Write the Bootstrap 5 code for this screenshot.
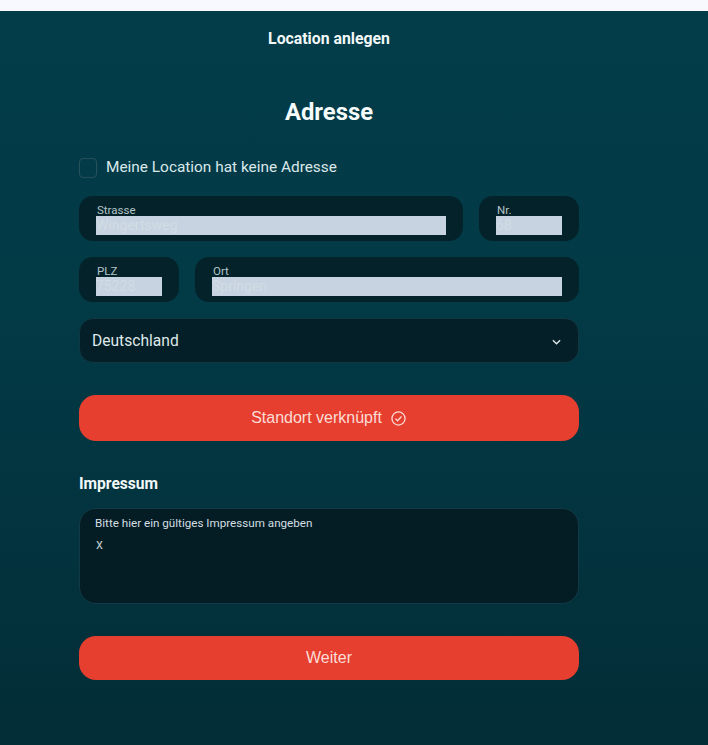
<!DOCTYPE html>
<html lang="de">
  <head>
    <meta charset="UTF-8" />
    <title>Location anlegen</title>
    <link
      href="https://cdn.jsdelivr.net/npm/bootstrap@5.3.0/dist/css/bootstrap.min.css"
      rel="stylesheet"
    />
    <style>
      body {
        background: #f8f9ff;
        font-family: Roboto, "Liberation Sans", sans-serif;
        color: #e8f1f2;
      }
      .top-strip {
        height: 11px;
      }
      .page-panel {
        height: 734px;
        padding: 0 129px 0 79px;
        background: linear-gradient(180deg, #033d49 0%, #023a46 40%, #032d37 100%);
      }
      .page-title {
        padding-top: 19px;
        font-size: 15.8px;
        font-weight: 700;
        line-height: 18px;
        color: #f2f8f8;
      }
      .section-title {
        margin: 50px 0 0;
        font-size: 23.8px;
        font-weight: 700;
        line-height: 28px;
        color: #f6fbfb;
      }
      .no-address {
        margin-top: 32px;
        height: 20px;
        font-size: 15.4px;
        color: #dbe8ea;
      }
      .fake-check {
        width: 18px;
        height: 20px;
        border: 1px solid #28505a;
        border-radius: 4px;
        margin-right: 9px;
      }
      .addr-row {
        display: flex;
        gap: 16px;
        margin-top: 16px;
      }
      .addr-row.first {
        margin-top: 18px;
      }
      .field-box {
        height: 45px;
        padding: 8px 17px 0;
        background: #04222a;
        border-radius: 14px;
      }
      .field-grow {
        flex: 1 1 0;
      }
      .field-small {
        flex: 0 0 100px;
      }
      .field-box label {
        display: block;
        padding-left: 1px;
        font-size: 11.5px;
        line-height: 12px;
        color: #b4c4c8;
      }
      .field-box input {
        display: block;
        width: 100%;
        height: 19px;
        padding: 0;
        border: 0;
        border-radius: 0;
        font-size: 14px;
        color: #d2dce5;
        background: #c7d3e0;
      }
      .country-select {
        margin-top: 16px;
        height: 45px;
        padding: 2px 17px 0 12px;
        font-size: 15.6px;
        color: #dfe9ea;
        background: #041f27;
        border: 1px solid #103842;
        border-radius: 14px;
      }
      .red-btn {
        display: flex;
        align-items: center;
        justify-content: center;
        width: 100%;
        border: 0;
        border-radius: 17px;
        font-family: "Liberation Sans", Arial, sans-serif;
        font-size: 16px;
        color: #fbdcd6;
        background: #e73f2f;
      }
      .btn-location {
        height: 46px;
        margin-top: 32px;
      }
      .btn-next {
        height: 44px;
        margin-top: 32px;
      }
      .check-icon {
        margin: 0 1px 0 9px;
      }
      .imprint-title {
        margin-top: 34px;
        font-size: 15.6px;
        font-weight: 700;
        line-height: 18px;
        color: #f2f8f8;
      }
      .imprint-box {
        height: 96px;
        margin-top: 15px;
        padding: 8px 15px;
        background: #041d24;
        border: 1px solid #123a44;
        border-radius: 17px;
      }
      .imprint-box label {
        display: block;
        font-size: 11.65px;
        line-height: 13px;
        color: #d3dfe1;
      }
      .imprint-value {
        margin: 6px 0 0 1px;
        font-size: 14px;
        line-height: 16px;
        color: #b7c5c8;
      }
    </style>
  </head>
  <body>
    <div class="top-strip"></div>
    <div class="page-panel">
      <div class="page-title text-center">Location anlegen</div>
      <h2 class="section-title text-center">Adresse</h2>

      <div class="no-address d-flex align-items-center">
        <span class="fake-check"></span>
        <span>Meine Location hat keine Adresse</span>
      </div>

      <div class="addr-row first">
        <div class="field-box field-grow">
          <label>Strasse</label>
          <input type="text" value="Wingertsweg" />
        </div>
        <div class="field-box field-small">
          <label>Nr.</label>
          <input type="text" value="68" />
        </div>
      </div>

      <div class="addr-row">
        <div class="field-box field-small">
          <label>PLZ</label>
          <input type="text" value="75228" />
        </div>
        <div class="field-box field-grow">
          <label>Ort</label>
          <input type="text" value="Springen" />
        </div>
      </div>

      <div class="country-select d-flex align-items-center justify-content-between">
        <span>Deutschland</span>
        <svg width="9" height="6" viewBox="0 0 10 6" fill="none" stroke="#dfe9ea" stroke-width="1.5">
          <path d="M1 1l4 4 4-4" />
        </svg>
      </div>

      <button type="button" class="red-btn btn-location">
        Standort verknüpft
        <svg class="check-icon" width="15" height="15" viewBox="0 0 16 16" fill="none" stroke="#fbdcd6" stroke-width="1.4">
          <circle cx="8" cy="8" r="7" />
          <path d="M4.8 8.2l2.2 2.2 4.2-4.6" />
        </svg>
      </button>

      <div class="imprint-title">Impressum</div>
      <div class="imprint-box">
        <label>Bitte hier ein gültiges Impressum angeben</label>
        <div class="imprint-value">x</div>
      </div>

      <button type="button" class="red-btn btn-next">Weiter</button>
    </div>
    <script src="https://cdn.jsdelivr.net/npm/bootstrap@5.3.0/dist/js/bootstrap.bundle.min.js"></script>
  </body>
</html>
